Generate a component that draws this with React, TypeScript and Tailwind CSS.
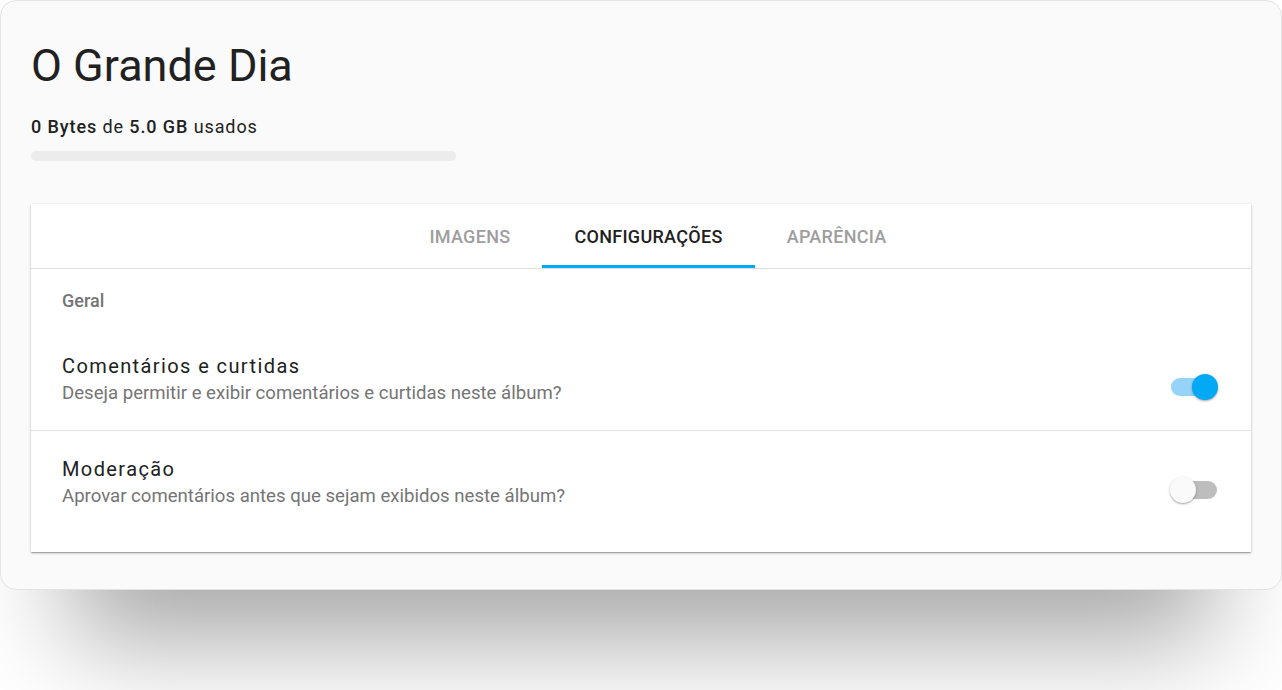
import React from 'react';

const Toggle: React.FC<{ on: boolean }> = ({ on }) => (
  <div className="relative w-[48px] h-[26px] shrink-0 mt-4">
    <div
      className={`absolute left-[1px] top-[4px] w-[46px] h-[18px] rounded-full ${
        on ? 'bg-[#95d3f8]' : 'bg-[#bdbdbd]'
      }`}
    />
    <div
      className={`absolute top-0 w-[26px] h-[26px] rounded-full shadow-[0_1px_3px_rgba(0,0,0,0.25),0_1px_1px_rgba(0,0,0,0.14)] ${
        on ? 'right-0 bg-[#03a9f4]' : 'left-0 bg-[#fafafa]'
      }`}
    />
  </div>
);

const App: React.FC = () => {
  const tabs = [
    { label: 'Imagens', active: false },
    { label: 'Configurações', active: true },
    { label: 'Aparência', active: false },
  ];

  const settings = [
    {
      title: 'Comentários e curtidas',
      text: 'Deseja permitir e exibir comentários e curtidas neste álbum?',
      on: true,
    },
    {
      title: 'Moderação',
      text: 'Aprovar comentários antes que sejam exibidos neste álbum?',
      on: false,
    },
  ];

  return (
    <div className="bg-white w-[1282px] h-[690px] overflow-hidden font-['Roboto',sans-serif]">
      <div className="w-[1282px] h-[590px] rounded-[16px] border border-[#e3e3e3] bg-[#fafafa] px-[30px] shadow-[0_120px_100px_-70px_rgba(0,0,0,0.35)]">
        <h1 className="pt-[42px] text-[45px] leading-[45px] text-[#212121]">O Grande Dia</h1>
        <p className="mt-[27px] text-[18px] leading-6 tracking-[0.9px] text-[#212121]">
          <span className="font-medium">0 Bytes</span> de <span className="font-medium">5.0 GB</span> usados
        </p>
        <div className="mt-[12px] w-[425px] h-[10px] rounded-full bg-[#ececec]" />

        <div className="mt-[43px] bg-white shadow-[0_1px_3px_rgba(0,0,0,0.2),0_1px_1px_rgba(0,0,0,0.14),0_2px_1px_-1px_rgba(0,0,0,0.12)] pb-[19px]">
          <div className="flex justify-center h-[65px] border-b border-[#e0e0e0] pl-[34px]">
            {tabs.map((t) => (
              <div
                key={t.label}
                className={`relative flex items-center px-8 text-[18px] tracking-[0.3px] font-medium uppercase ${
                  t.active ? 'text-[#212121]' : 'text-[#9e9e9e]'
                }`}
              >
                {t.label}
                {t.active && <div className="absolute left-0 right-0 bottom-0 h-[3px] bg-[#03a9f4]" />}
              </div>
            ))}
          </div>

          <div className="pt-[20px] pl-[31px] text-[18px] leading-6 font-medium text-[#757575]">Geral</div>

          <div className="mt-[15px]">
            {settings.map((s, i) => (
              <div
                key={s.title}
                className={`flex items-center justify-between pl-[31px] pr-[33px] py-6 ${
                  i > 0 ? 'border-t border-[#e0e0e0]' : ''
                }`}
              >
                <div>
                  <div className="text-[20px] leading-[28px] tracking-[1.4px] text-[#212121]">{s.title}</div>
                  <div className="text-[18.6px] leading-[26px] text-[#757575]">{s.text}</div>
                </div>
                <Toggle on={s.on} />
              </div>
            ))}
          </div>
        </div>
      </div>
    </div>
  );
};

export default App;
